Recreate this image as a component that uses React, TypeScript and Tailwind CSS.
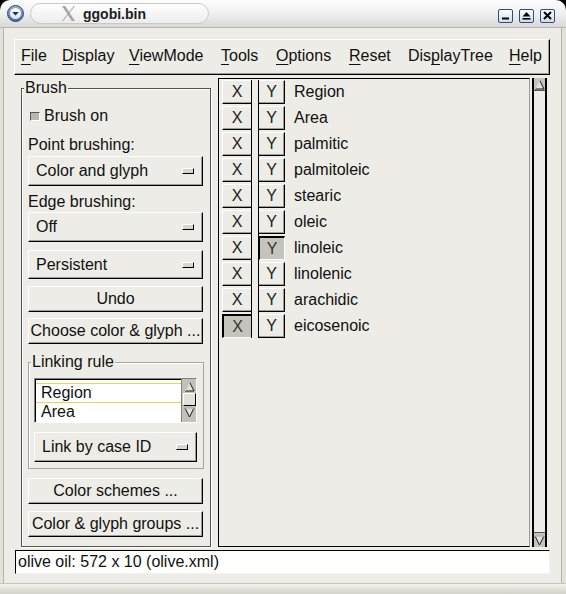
import React from "react";

const raised =
  "border border-t-white border-l-white border-b-black border-r-black shadow-[inset_-1px_-1px_0_#9d9d95] bg-[#edece6]";

function Indicator() {
  return (
    <span className="block w-[12px] h-[6px] border border-t-white border-l-white border-b-black border-r-black bg-[#d6d6ce]" />
  );
}

function OptionMenu({ label, h, extra = "" }: { label: string; h: string; extra?: string }) {
  return (
    <div className={`${raised} ${h} ${extra} flex items-center justify-between pl-[7px] pr-[8px]`}>
      <span className="leading-[18px]">{label}</span>
      <Indicator />
    </div>
  );
}

function Button({ label, extra }: { label: string; extra: string }) {
  return (
    <div className={`${raised} ${extra} w-[175px] flex items-center justify-center`}>
      <span className="leading-[18px] whitespace-nowrap">{label}</span>
    </div>
  );
}

function ArrowUp() {
  return (
    <svg width="11" height="11" viewBox="0 0 11 11">
      <polygon points="1,10 5.5,1 10,10" fill="#e2e2da" stroke="#1a1a1a" strokeWidth="1" />
      <line x1="1" y1="10" x2="5.5" y2="1" stroke="#ffffff" strokeWidth="1" />
    </svg>
  );
}

function ArrowDown() {
  return (
    <svg width="11" height="11" viewBox="0 0 11 11">
      <polygon points="1,1 5.5,10 10,1" fill="#e2e2da" stroke="#1a1a1a" strokeWidth="1" />
      <line x1="1" y1="1" x2="10" y2="1" stroke="#ffffff" strokeWidth="1" />
    </svg>
  );
}

const vars = [
  "Region",
  "Area",
  "palmitic",
  "palmitoleic",
  "stearic",
  "oleic",
  "linoleic",
  "linolenic",
  "arachidic",
  "eicosenoic",
];

const menu: { pre: string; u: string; post: string; w: string }[] = [
  { pre: "", u: "F", post: "ile", w: "w-[41px]" },
  { pre: "", u: "D", post: "isplay", w: "w-[67px]" },
  { pre: "", u: "V", post: "iewMode", w: "w-[92px]" },
  { pre: "", u: "T", post: "ools", w: "w-[55px]" },
  { pre: "", u: "O", post: "ptions", w: "w-[73px]" },
  { pre: "", u: "R", post: "eset", w: "w-[59px]" },
  { pre: "Dis", u: "p", post: "layTree", w: "w-[101px]" },
  { pre: "", u: "H", post: "elp", w: "w-auto" },
];

export default function App() {
  return (
    <div className="w-[566px] h-[594px] bg-black overflow-hidden font-['Liberation_Sans',Arial,Helvetica,sans-serif] text-[#111] text-[16px]">
      {/* Title bar */}
      <div className="h-[28px] rounded-t-[10px] bg-gradient-to-b from-[#fdfdfd] via-[#f0f0f0] to-[#d8d8d8] border-b border-[#b8b8b0] flex items-center">
        <div className="ml-[7px] w-[17px] h-[17px]">
          <svg width="17" height="17" viewBox="0 0 17 17">
            <defs>
              <linearGradient id="cg" x1="0" y1="0" x2="0" y2="1">
                <stop offset="0" stopColor="#9fb2d4" />
                <stop offset="1" stopColor="#4b679a" />
              </linearGradient>
              <linearGradient id="cg2" x1="0" y1="0" x2="0" y2="1">
                <stop offset="0" stopColor="#ffffff" />
                <stop offset="1" stopColor="#d9e1ee" />
              </linearGradient>
            </defs>
            <circle cx="8.5" cy="8.5" r="8" fill="url(#cg)" stroke="#2f4a7a" strokeWidth="1" />
            <circle cx="8.5" cy="8.5" r="5.6" fill="url(#cg2)" />
            <path d="M5.2 7 L8.5 10.6 L11.8 7 Z" fill="#1c2f55" />
          </svg>
        </div>
        <div className="ml-[6px] w-[179px] h-[21px] rounded-[11px] border border-[#c9c9c9] bg-gradient-to-b from-[#ffffff] to-[#ececec] flex items-center pl-[31px]">
          <svg width="13" height="15" viewBox="0 0 13 15">
            <polygon points="0,0 3.2,0 13,15 9.8,15" fill="#a6a6a6" />
            <polygon points="11.8,0 13,0 1.2,15 0,15" fill="#a6a6a6" />
          </svg>
          <span className="ml-[8px] text-[14px] font-bold text-[#1e1e1e] leading-[16px]">ggobi.bin</span>
        </div>
        <div className="flex-1" />
        <div className="flex gap-[6px] mr-[11px] mt-[4px]">
          <div className="w-[15px] h-[14px] rounded-[2px] border border-[#2c4c84] bg-gradient-to-b from-white to-[#d3dbe8] flex items-center justify-center">
            <svg width="9" height="9" viewBox="0 0 9 9">
              <rect x="1" y="6.5" width="7" height="2" fill="#000" />
            </svg>
          </div>
          <div className="w-[15px] h-[14px] rounded-[2px] border border-[#2c4c84] bg-gradient-to-b from-white to-[#d3dbe8] flex items-center justify-center">
            <svg width="9" height="9" viewBox="0 0 9 9">
              <polygon points="0.5,5.5 4.5,1 8.5,5.5" fill="#000" />
              <rect x="0.5" y="7" width="8" height="1.6" fill="#000" />
            </svg>
          </div>
          <div className="w-[15px] h-[14px] rounded-[2px] border border-[#2c4c84] bg-gradient-to-b from-white to-[#d3dbe8] flex items-center justify-center">
            <svg width="9" height="9" viewBox="0 0 9 9">
              <path d="M1 1 L8 8 M8 1 L1 8" stroke="#000" strokeWidth="2" />
            </svg>
          </div>
        </div>
      </div>

      {/* Body */}
      <div className="h-[555px] flex bg-[#edece6]">
        <div className="w-[4px] bg-[#e2e2da] border-r border-[#b4b4ac]" />
        <div className="flex-1 flex flex-col">
          {/* Menubar */}
          <div className={`${raised} ml-[10px] mt-[11px] w-[536px] h-[36px] flex items-start pl-[6px] pt-[7px]`}>
            {menu.map((m) => (
              <span key={m.u + m.post} className={`${m.w} leading-[18px] whitespace-nowrap`}>
                {m.pre}
                <span className="underline underline-offset-[3px] decoration-1">{m.u}</span>
                {m.post}
              </span>
            ))}
          </div>

          {/* Main row */}
          <div className="mt-[3px] h-[469px] flex">
            {/* Left: Brush frame */}
            <div className="ml-[17px] w-[190px] pt-[10px]">
              <div className="relative h-[459px] border border-[#55554f] shadow-[inset_1px_1px_0_#ffffff,1px_1px_0_#ffffff] pl-[6px] flex flex-col">
                <span className="absolute left-[2px] top-[-10px] px-[1px] bg-[#edece6] leading-[18px]">Brush</span>

                <div className="mt-[18px] h-[18px] flex items-center pl-[2px]">
                  <span className="block w-[10px] h-[9px] bg-[#b8b8b0] border border-t-[#55554f] border-l-[#55554f] border-b-white border-r-white" />
                  <span className="ml-[4px] leading-[18px]">Brush on</span>
                </div>

                <div className="mt-[11px] h-[18px] leading-[18px]">Point brushing:</div>
                <OptionMenu label="Color and glyph" h="h-[30px]" extra="mt-[2px] w-[175px]" />

                <div className="mt-[7px] h-[18px] leading-[18px]">Edge brushing:</div>
                <OptionMenu label="Off" h="h-[30px]" extra="mt-[1px] w-[175px]" />

                <OptionMenu label="Persistent" h="h-[29px]" extra="mt-[8px] w-[175px]" />

                <Button label="Undo" extra="mt-[7px] h-[26px]" />
                <Button label="Choose color & glyph ..." extra="mt-[6px] h-[26px]" />

                {/* Linking rule frame */}
                <div className="relative mt-[18px] w-[176px] h-[107px] border border-[#a6a69e] shadow-[inset_1px_1px_0_#ffffff] flex flex-col">
                  <span className="absolute left-[2px] top-[-10px] px-[1px] bg-[#edece6] leading-[18px]">Linking rule</span>
                  <div className="mt-[15px] ml-[5px] w-[163px] h-[45px] flex bg-white border border-t-[#84847c] border-l-[#84847c] border-b-white border-r-white shadow-[inset_1px_1px_0_#000000]">
                    <div className="flex-1 pt-[4px] pl-[1px]">
                      <div className="h-[20px] border-y border-[#f3cf55] pl-[5px] leading-[18px]">Region</div>
                      <div className="h-[18px] pl-[5px] leading-[18px]">Area</div>
                    </div>
                    <div className="w-[15px] bg-[#c2c2ba] border-l border-[#84847c] flex flex-col items-center pt-[2px]">
                      <ArrowUp />
                      <div className="mt-[1px] w-[13px] h-[13px] border border-t-white border-l-white border-b-black border-r-black bg-[#e2e2da]" />
                      <div className="mt-[1px]">
                        <ArrowDown />
                      </div>
                    </div>
                  </div>
                  <OptionMenu label="Link by case ID" h="h-[30px]" extra="mt-[9px] ml-[5px] w-[163px]" />
                </div>

                <Button label="Color schemes ..." extra="mt-[9px] h-[26px]" />
                <Button label="Color & glyph groups ..." extra="mt-[7px] h-[26px]" />
              </div>
            </div>

            {/* Right: variable panel */}
            <div className="ml-[7px] w-[312px] h-[469px] border border-t-black border-l-black border-b-black border-r-[#9d9d95] flex items-start pt-[1px]">
              <div className="ml-[3px] flex flex-col gap-[2px] border-r border-black">
                {vars.map((v, i) => {
                  const pressed = i === 9;
                  return (
                    <div
                      key={"x" + v}
                      className={
                        pressed
                          ? "w-[29px] h-[24px] flex items-center justify-center bg-[#c4c4bc] border-t-2 border-l-2 border-t-black border-l-black border-b border-b-white leading-[18px] text-[#333]"
                          : "w-[29px] h-[24px] flex items-center justify-center bg-[#edece6] border-t border-l border-b border-t-white border-l-white border-b-black shadow-[inset_0_-1px_0_#9d9d95] leading-[18px] text-[#222]"
                      }
                    >
                      X
                    </div>
                  );
                })}
              </div>
              <div className="ml-[6px] flex flex-col gap-[2px] border-l border-black">
                {vars.map((v, i) => {
                  const pressed = i === 6;
                  return (
                    <div
                      key={"y" + v}
                      className={
                        pressed
                          ? "w-[26px] h-[24px] flex items-center justify-center bg-[#c4c4bc] border-t-2 border-l border-t-black border-l-black border-b border-r border-b-white border-r-white leading-[18px] text-[#333]"
                          : "w-[26px] h-[24px] flex items-center justify-center bg-[#edece6] border-t border-b border-r border-t-white border-b-black border-r-black shadow-[inset_-1px_-1px_0_#9d9d95] leading-[18px] text-[#222]"
                      }
                    >
                      Y
                    </div>
                  );
                })}
              </div>
              <div className="ml-[9px] flex flex-col gap-[2px]">
                {vars.map((v) => (
                  <div key={"l" + v} className="h-[24px] leading-[24px] whitespace-nowrap">
                    {v}
                  </div>
                ))}
              </div>
            </div>

            {/* Scrollbar */}
            <div className="ml-[2px] w-[15px] h-[469px] border-x-2 border-black bg-[#edece6] flex flex-col">
              <div className="h-[13px] bg-[#c4c4bc] flex items-center justify-center border-b border-[#55554f]">
                <ArrowUp />
              </div>
              <div className="flex-1" />
              <div className="h-[15px] bg-[#c4c4bc] flex items-center justify-center border-t border-[#55554f]">
                <ArrowDown />
              </div>
            </div>
          </div>

          {/* Status bar */}
          <div className="mt-[3px] ml-[11px] w-[535px] h-[24px] bg-white border border-t-black border-l-black border-b-[#f4f4f0] border-r-[#f4f4f0] pl-[2px] leading-[22px] whitespace-nowrap">
            olive oil: 572 x 10 (olive.xml)
          </div>
        </div>
        <div className="w-[5px] bg-[#e2e2da] border-l border-[#b4b4ac]" />
      </div>
      <div className="h-[11px] bg-gradient-to-b from-[#f2f2ec] to-[#d2d2ca] border-t border-[#c6c6be]" />
    </div>
  );
}
